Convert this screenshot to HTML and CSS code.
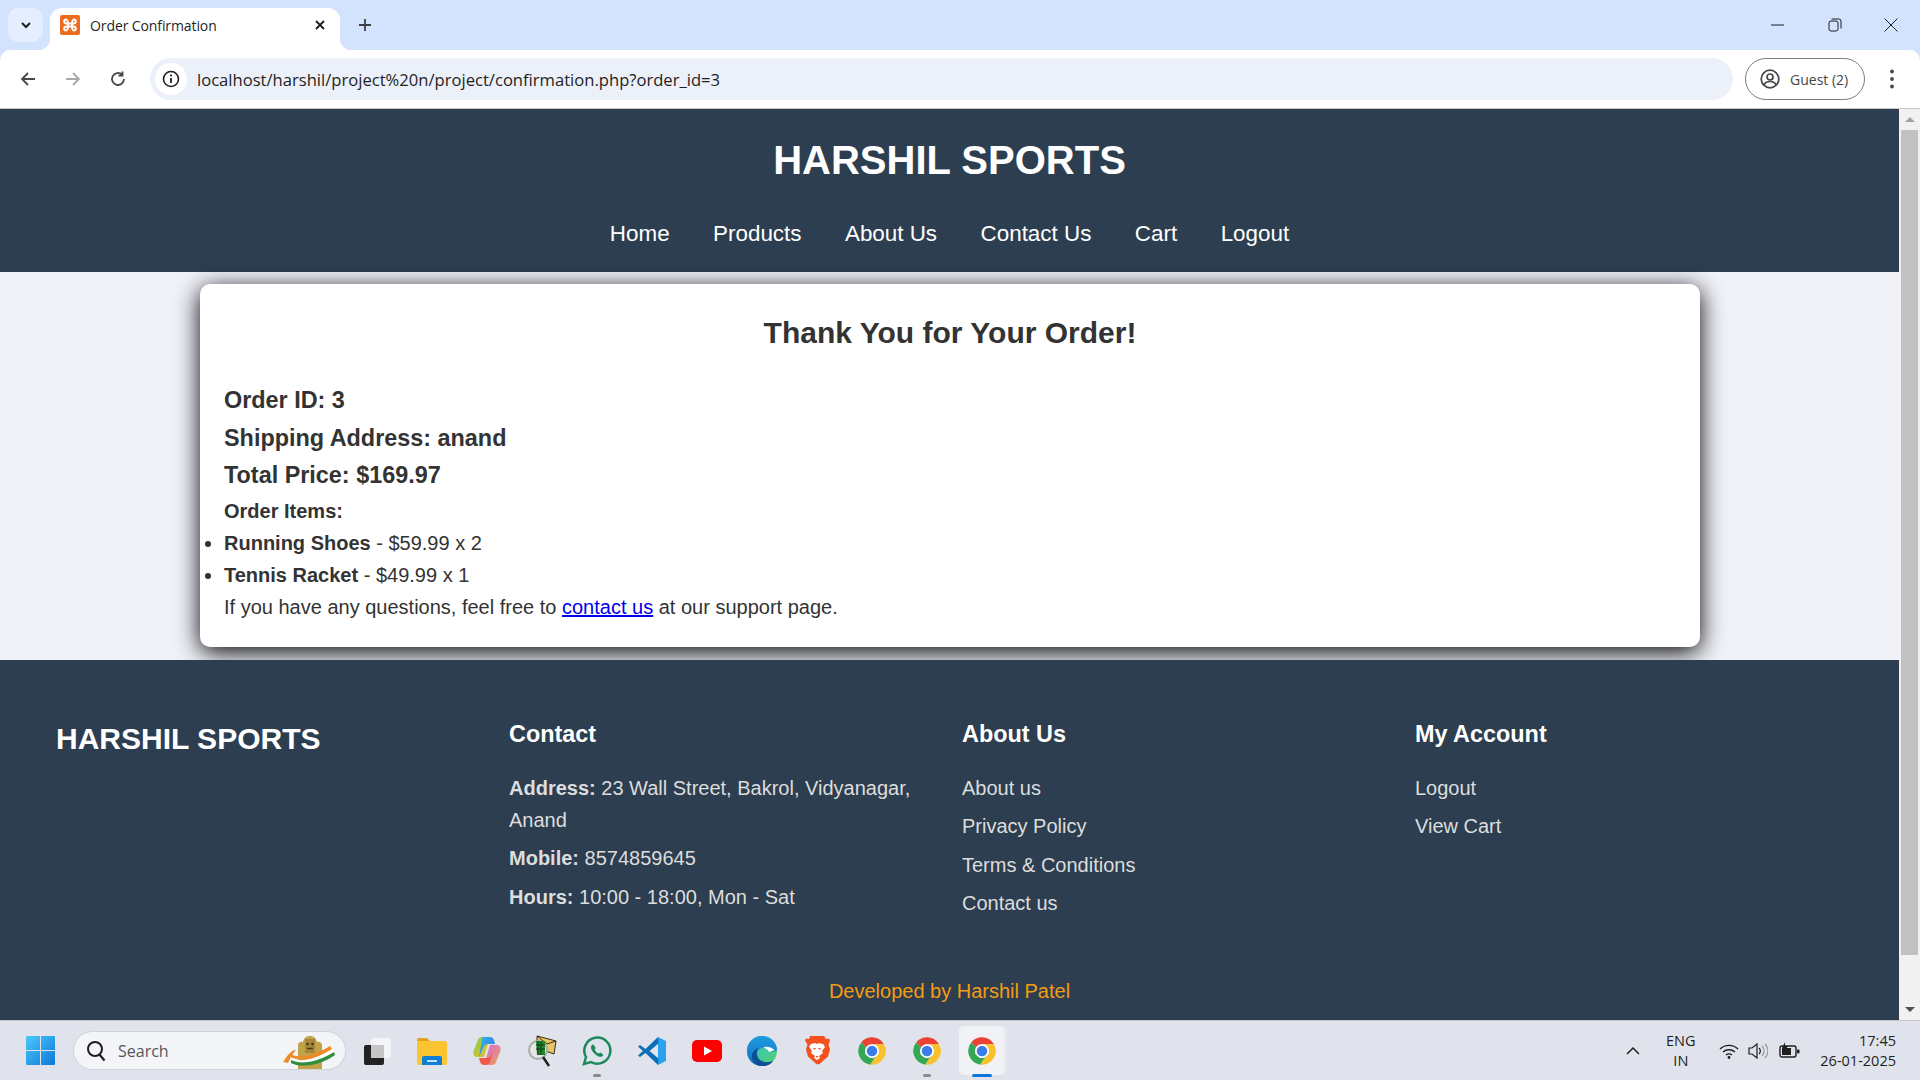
FILE: index.html
```html
<!DOCTYPE html>
<html lang="en">
<head>
  <meta charset="UTF-8" />
  <meta name="viewport" content="width=device-width, initial-scale=1" />
  <title>Order Confirmation</title>
  <link rel="stylesheet" href="styles.css">
</head>
<body>
  <svg class="defs" width="0" height="0">
    <symbol id="chrome" viewBox="0 0 24 24">
      <path fill="#ea4335" d="M12 1A11 11 0 0 1 21.53 6.5H12A5.5 5.5 0 0 0 7.24 9.25L3.47 5.07A11 11 0 0 1 12 1Z"/>
      <path fill="#34a853" d="M3.47 5.07A11 11 0 0 0 10.6 22.9L14.75 16.76A5.5 5.5 0 0 1 7.24 9.25Z"/>
      <path fill="#fbc02d" d="M21.53 6.5A11 11 0 0 1 10.6 22.9L14.75 16.76A5.5 5.5 0 0 0 12 6.5Z"/>
      <circle cx="12" cy="12" r="5.5" fill="#fff"/>
      <circle cx="12" cy="12" r="4.2" fill="#3b7de8"/>
    </symbol>
  </svg>

  <div class="tabstrip">
    <button class="tab-search">
      <svg width="14" height="14" viewBox="0 0 14 14"><path d="M3 5l4 4 4-4" fill="none" stroke="#1f1f1f" stroke-width="2"/></svg>
    </button>
    <div class="tab">
      <svg class="favicon" width="20" height="20" viewBox="0 0 20 20">
        <rect width="20" height="20" rx="2" fill="#ed6c1f"/>
        <path d="M6 4.5c-2.5 0-2.5 4 .5 4h7c3 0 3-4 .5-4-2 0-2 3-2 5.500s0 5.500 2 5.500c2.500 0 2.500-4-.5-4h-7c-3 0-3 4-.5 4 2 0 2-3 2-5.500s0-5.500-2-5.500Z" fill="none" stroke="#fff" stroke-width="2"/>
      </svg>
      <span class="tab-title">Order Confirmation</span>
      <svg class="tab-close" width="12" height="12" viewBox="0 0 12 12"><path d="M2 2l8 8M10 2l-8 8" stroke="#1f1f1f" stroke-width="1.800"/></svg>
    </div>
    <svg class="new-tab" width="14" height="14" viewBox="0 0 14 14"><path d="M7 1v12M1 7h12" stroke="#3c4043" stroke-width="1.800"/></svg>
    <div class="window-controls">
      <svg width="14" height="14" viewBox="0 0 14 14"><path d="M0 7h13" stroke="#1f1f1f"/></svg>
      <svg width="14" height="14" viewBox="0 0 14 14"><rect x="1" y="3" width="9" height="10" rx="2" fill="none" stroke="#1f1f1f"/><path d="M3.500 1H11a2 2 0 0 1 2 2v7.500" fill="none" stroke="#1f1f1f"/></svg>
      <svg width="14" height="14" viewBox="0 0 14 14"><path d="M.5.5l13 13M13.500.5l-13 13" stroke="#1f1f1f"/></svg>
    </div>
  </div>

  <div class="toolbar">
    <svg class="nav-icon" width="18" height="18" viewBox="0 0 18 18"><path d="M16 9H3M9 3L3 9l6 6" fill="none" stroke="#474747" stroke-width="1.800"/></svg>
    <svg class="nav-icon" width="18" height="18" viewBox="0 0 18 18"><path d="M2 9h13M9 3l6 6-6 6" fill="none" stroke="#a8a8a8" stroke-width="1.800"/></svg>
    <svg class="nav-icon" width="18" height="18" viewBox="0 0 18 18"><path d="M15 9a6 6 0 1 1-2-4.500M13.500 1.500v4h-4" fill="none" stroke="#474747" stroke-width="1.800"/></svg>
    <div class="omnibox">
      <span class="site-info">
        <svg width="18" height="18" viewBox="0 0 18 18"><circle cx="9" cy="9" r="7.500" fill="none" stroke="#1f1f1f" stroke-width="1.600"/><path d="M9 8v5" stroke="#1f1f1f" stroke-width="1.800"/><circle cx="9" cy="5.500" r="1.100" fill="#1f1f1f"/></svg>
      </span>
      <span class="url">localhost/harshil/project%20n/project/confirmation.php?order_id=3</span>
    </div>
    <div class="profile">
      <svg width="20" height="20" viewBox="0 0 20 20"><circle cx="10" cy="10" r="8.800" fill="none" stroke="#474747" stroke-width="1.700"/><circle cx="10" cy="8" r="3" fill="none" stroke="#474747" stroke-width="1.700"/><path d="M4 16c1-3 3.500-3.500 6-3.500s5 .5 6 3.500" fill="none" stroke="#474747" stroke-width="1.700"/></svg>
      <span>Guest (2)</span>
    </div>
    <svg class="kebab" width="6" height="20" viewBox="0 0 6 20"><circle cx="3" cy="2.500" r="1.900" fill="#474747"/><circle cx="3" cy="10" r="1.900" fill="#474747"/><circle cx="3" cy="17.500" r="1.900" fill="#474747"/></svg>
  </div>

  <div class="viewport">
    <div class="page">
      <header class="site-header">
        <h1>HARSHIL SPORTS</h1>
        <nav class="main-nav">
          <a href="#">Home</a>
          <a href="#">Products</a>
          <a href="#">About Us</a>
          <a href="#">Contact Us</a>
          <a href="#">Cart</a>
          <a href="#">Logout</a>
        </nav>
      </header>

      <main class="content">
        <section class="order-card">
          <h2>Thank You for Your Order!</h2>
          <p class="order-line">Order ID: 3</p>
          <p class="order-line">Shipping Address: anand</p>
          <p class="order-line">Total Price: $169.97</p>
          <p class="items-title">Order Items:</p>
          <ul class="items">
            <li><strong>Running Shoes</strong> - $59.99 x 2</li>
            <li><strong>Tennis Racket</strong> - $49.99 x 1</li>
          </ul>
          <p class="support">If you have any questions, feel free to <a href="#">contact us</a> at our support page.</p>
        </section>
      </main>

      <footer class="site-footer">
        <div class="footer-cols">
          <div class="footer-brand">HARSHIL SPORTS</div>
          <div class="footer-col">
            <h3>Contact</h3>
            <p><strong>Address:</strong> 23 Wall Street, Bakrol, Vidyanagar, Anand</p>
            <p><strong>Mobile:</strong> 8574859645</p>
            <p><strong>Hours:</strong> 10:00 - 18:00, Mon - Sat</p>
          </div>
          <div class="footer-col">
            <h3>About Us</h3>
            <p><a href="#">About us</a></p>
            <p><a href="#">Privacy Policy</a></p>
            <p><a href="#">Terms &amp; Conditions</a></p>
            <p><a href="#">Contact us</a></p>
          </div>
          <div class="footer-col">
            <h3>My Account</h3>
            <p><a href="#">Logout</a></p>
            <p><a href="#">View Cart</a></p>
          </div>
        </div>
        <p class="credit">Developed by Harshil Patel</p>
      </footer>
    </div>

    <div class="scrollbar">
      <div class="scroll-btn"><span class="arrow-up"></span></div>
      <div class="scroll-thumb"></div>
      <div class="scroll-btn"><span class="arrow-down"></span></div>
    </div>
  </div>

  <div class="taskbar">
    <svg class="start" width="29" height="29" viewBox="0 0 29 29">
      <defs><linearGradient id="win" x1="0" y1="0" x2="1" y2="1"><stop offset="0" stop-color="#4fc8fb"/><stop offset="1" stop-color="#0a78d8"/></linearGradient></defs>
      <path fill="url(#win)" d="M1 0h13v14H0V1a1 1 0 0 1 1-1ZM15 0h13a1 1 0 0 1 1 1v13H15ZM0 15h14v14H1a1 1 0 0 1-1-1ZM15 15h14v13a1 1 0 0 1-1 1H15Z"/>
    </svg>
    <div class="search-pill">
      <svg width="20" height="22" viewBox="0 0 20 22"><circle cx="9" cy="9" r="7" fill="none" stroke="#1f1f1f" stroke-width="2"/><path d="M13.500 14.500l5 6" stroke="#1f1f1f" stroke-width="2.200"/></svg>
      <span>Search</span>
      <svg class="emblem" width="56" height="36" viewBox="0 0 56 36">
        <path d="M16 36V12c0-3 3-4 5-3 1-4 3-6 7-6s6 2 7 6c2-1 5 0 5 3v24Z" fill="#c2a34a"/>
        <path d="M23 6h10v14H23Z" fill="#a6873a"/>
        <circle cx="25.500" cy="11" r="1.300" fill="#4a3a14"/><circle cx="30.500" cy="11" r="1.300" fill="#4a3a14"/>
        <path d="M25 15.500h6" stroke="#4a3a14" stroke-width="1.500"/>
        <path d="M1 29c6-9 9-12 13-12-3 3-5 7-8 13Z" fill="#f08a24"/>
        <path d="M8 24c8 6 22 4 42-8l2 3C38 30 20 33 9 27Z" fill="#fff"/>
        <path d="M8 21c9 5 24 2 40-8l2 3C34 26 20 29 8 24Z" fill="#f08a24"/>
        <path d="M9 27c10 5 27 2 43-8l1 3C38 33 18 35 9 30Z" fill="#2f8f3a"/>
      </svg>
    </div>

    <div class="task-items">
      <div class="task-item">
        <svg width="28" height="28" viewBox="0 0 28 28">
          <rect x="1" y="8" width="20" height="20" rx="2" fill="#222"/>
          <rect x="8" y="1" width="20" height="20" rx="2" fill="#f5f5f7"/>
          <rect x="8" y="8" width="13" height="13" fill="#c6c6c8"/>
        </svg>
      </div>
      <div class="task-item">
        <svg width="30" height="28" viewBox="0 0 30 28">
          <path d="M0 3a2 2 0 0 1 2-2h8l3 3h-13Z" fill="#e0a21a"/>
          <path d="M0 4h28a2 2 0 0 1 2 2v20a2 2 0 0 1-2 2H2a2 2 0 0 1-2-2Z" fill="#fbc531"/>
          <path d="M5 28v-7a2 2 0 0 1 2-2h16a2 2 0 0 1 2 2v7Z" fill="#0f7fd6"/>
          <path d="M10 24h10" stroke="#bfe3fb" stroke-width="2"/>
        </svg>
      </div>
      <div class="task-item">
        <svg width="28" height="30" viewBox="0 0 28 30">
          <defs>
            <linearGradient id="copA" x1="0" y1="0" x2="1" y2="1"><stop offset="0" stop-color="#2fb7e8"/><stop offset="1" stop-color="#3b6fe0"/></linearGradient>
            <linearGradient id="copB" x1="0" y1="0" x2="1" y2="1"><stop offset="0" stop-color="#d76be0"/><stop offset="1" stop-color="#f0a04a"/></linearGradient>
            <linearGradient id="copC" x1="0" y1="0" x2="1" y2="1"><stop offset="0" stop-color="#7cc94a"/><stop offset="1" stop-color="#f2c230"/></linearGradient>
          </defs>
          <path d="M9 1h8l-6 20H4C0 21 0 17 1 14L5 4c.7-2 2-3 4-3Z" fill="url(#copC)"/>
          <path d="M9 1h8c2 0 3 1 4 3l1 4h-7c-3 0-4 1-5 4l-4 9 3-17c.2-2 .5-3 0-3Z" fill="url(#copA)"/>
          <path d="M19 29h-8l6-20h7c4 0 4 4 3 7l-4 10c-.7 2-2 3-4 3Z" fill="url(#copB)"/>
          <path d="M11 29c-2 0-3-1-4-3l-1-4h8c2 0 3-1 4-3l2-5-3 12c-.5 2-3 3-6 3Z" fill="#ef5a4a"/>
        </svg>
      </div>
      <div class="task-item">
        <svg width="30" height="32" viewBox="0 0 30 32">
          <path d="M10 1l19 5-2 13-17-6Z" fill="#e8c468" stroke="#3a3010"/>
          <path d="M10 1l10 8 9-3" fill="none" stroke="#3a3010"/>
          <circle cx="11" cy="15" r="9" fill="#e6e6e6" stroke="#aaa" stroke-width="2"/>
          <path d="M9 6h9v14H10Z" fill="#1f8a2a"/>
          <path d="M11 6v14M14 6v14M9 10h9M9 14h9" stroke="#0c3d10"/>
          <path d="M16 22l6 9" stroke="#222" stroke-width="2.500"/>
        </svg>
      </div>
      <div class="task-item running">
        <svg width="30" height="30" viewBox="0 0 30 30">
          <path d="M2 28l2-7A13 13 0 1 1 9 26Z" fill="none" stroke="#1b8a5a" stroke-width="2.500"/>
          <path d="M10.500 8.500c-1.500 1-2 3-1 5 1.500 3 4 5.500 7 7 2 .8 4 .3 5-1.500l-3-2.500-2 1c-1.500-.7-3-2.200-3.800-3.800l1-2-2.500-3.200Z" fill="#1b8a5a"/>
        </svg>
      </div>
      <div class="task-item">
        <svg width="30" height="30" viewBox="0 0 30 30">
          <path d="M21 1l8 4v20l-8 4Z" fill="#2aa3ee"/>
          <path d="M21 1L8.500 13 3 9 1 10.500 6 15l-5 4.500L3 21l5.500-4L21 29l.5-6.500L12.500 15l9-7.500Z" fill="#0b6fb8"/>
        </svg>
      </div>
      <div class="task-item">
        <svg width="30" height="22" viewBox="0 0 30 22">
          <rect width="30" height="22" rx="5" fill="#f00"/>
          <path d="M12 6.500l8 4.500-8 4.500Z" fill="#fff"/>
        </svg>
      </div>
      <div class="task-item">
        <svg width="30" height="30" viewBox="0 0 30 30">
          <defs>
            <linearGradient id="edgeA" x1="0" y1="0" x2="1" y2="1"><stop offset="0" stop-color="#2ec4d8"/><stop offset="1" stop-color="#56d06a"/></linearGradient>
            <linearGradient id="edgeB" x1="0" y1="0" x2="0" y2="1"><stop offset="0" stop-color="#1f9be0"/><stop offset="1" stop-color="#1270c0"/></linearGradient>
          </defs>
          <circle cx="15" cy="15" r="15" fill="url(#edgeA)"/>
          <path d="M15 0C6 0 0 7 0 15c0 9 7 15 15 15 5 0 9-2 11-5-8 3-15 0-16-6-.6-4 2-7 6-7 3 0 5 2 6 4 2-1 8 0 8-2C30 6 23 0 15 0Z" fill="url(#edgeB)"/>
          <path d="M10 19c1 6 8 9 16 6-2 3-6 5-11 5-5 0-9-3-10-8-1-4 2-9 7-10-2 2-2.500 4-2 7Z" fill="#0e4f96"/>
          <path d="M16 12c3 0 5 2 6 4 2-1 4-1 6-2-3-2-9-5-12-2Z" fill="#fff"/>
        </svg>
      </div>
      <div class="task-item">
        <svg width="26" height="30" viewBox="0 0 26 30">
          <path d="M6 0h14l2 3 3-.5 1 2-1.500 4 1.500 5-2 7-9 8-1-.5-1 .5-9-8-2-7 1.500-5L1 4.500l1-2L5 3Z" fill="#f4511e"/>
          <path d="M7 8l4-1 2 1 2-1 4 1 2 3-3 4 1 2-4 3 1 2-3 2-3-2 1-2-4-3 1-2-3-4Z" fill="#fff"/>
          <path d="M9 12h3l-1.500 2ZM14 12h3l-1.500 2ZM11.500 20h3L13 22Z" fill="#f4511e"/>
        </svg>
      </div>
      <div class="task-item"><svg width="30" height="30"><use href="#chrome"/></svg></div>
      <div class="task-item running"><svg width="30" height="30"><use href="#chrome"/></svg></div>
      <div class="task-item active"><svg width="30" height="30"><use href="#chrome"/></svg></div>
    </div>

    <div class="tray">
      <svg class="tray-chevron" width="14" height="9" viewBox="0 0 14 9"><path d="M1 8l6-6 6 6" fill="none" stroke="#1f1f1f" stroke-width="1.500"/></svg>
      <div class="tray-lang">ENG<br>IN</div>
      <svg class="tray-wifi" width="20" height="16" viewBox="0 0 20 16"><path d="M1 6a13 13 0 0 1 18 0M4 9a9 9 0 0 1 12 0M7 12a5 5 0 0 1 6 0" fill="none" stroke="#1f1f1f" stroke-width="1.400"/><circle cx="10" cy="14.500" r="1.400" fill="#1f1f1f"/></svg>
      <svg class="tray-sound" width="20" height="16" viewBox="0 0 20 16"><path d="M1 5h3l5-4v14l-5-4H1Z" fill="none" stroke="#1f1f1f" stroke-width="1.200"/><path d="M11 5a4 4 0 0 1 0 6" fill="none" stroke="#1f1f1f" stroke-width="1.200"/><path d="M14 3a7 7 0 0 1 0 10M17 1a10 10 0 0 1 0 14" fill="none" stroke="#9a9a9a" stroke-width="1.200"/></svg>
      <svg class="tray-battery" width="21" height="17" viewBox="0 0 21 17"><rect x="1" y="4" width="16" height="11" rx="2" fill="none" stroke="#1f1f1f" stroke-width="1.400"/><rect x="3" y="6" width="9" height="7" fill="#1f1f1f"/><rect x="18" y="7.500" width="2.500" height="4" rx="1" fill="#1f1f1f"/><path d="M6 0L3 6h3l-1 4 4-6H6Z" fill="#1f1f1f"/></svg>
      <div class="tray-clock">17:45<br>26-01-2025</div>
    </div>
  </div>
</body>
</html>
```

FILE: styles.css
```css
* {
  box-sizing: border-box;
}
html, body {
  margin: 0;
  height: 1080px;
  overflow: hidden;
}
body {
  display: flex;
  flex-direction: column;
  font-family: "Liberation Sans", Arial, sans-serif;
  background-color: #d3e3fd;
}
.defs {
  display: none;
}

/* browser chrome */
.tabstrip {
  height: 50px;
  flex: none;
  display: flex;
  align-items: flex-end;
  background-color: #d3e3fd;
}
.tab-search {
  width: 35px;
  height: 34px;
  margin: 0 7px 8px 8px;
  padding: 0;
  border: none;
  border-radius: 10px;
  background-color: #e4eefe;
  display: flex;
  align-items: center;
  justify-content: center;
}
.tab {
  position: relative;
  width: 290px;
  height: 42px;
  padding: 0 14px 8px 10px;
  display: flex;
  align-items: center;
  background-color: #fff;
  border-radius: 12px 12px 0 0;
}
.tab::before,
.tab::after {
  content: "";
  position: absolute;
  bottom: 0;
  width: 12px;
  height: 12px;
}
.tab::before {
  left: -12px;
  background: radial-gradient(circle at 0 0, #d3e3fd 12px, #fff 12.5px);
}
.tab::after {
  right: -12px;
  background: radial-gradient(circle at 100% 0, #d3e3fd 12px, #fff 12.5px);
}
.favicon {
  flex: none;
}
.tab-title {
  flex: 1;
  margin-left: 10px;
  font-family: "Open Sans", sans-serif;
  font-size: 14px;
  letter-spacing: -0.1px;
  color: #1f1f1f;
}
.new-tab {
  margin: 0 0 18px 18px;
}
.window-controls {
  margin-left: auto;
  width: 149px;
  padding-right: 22px;
  height: 100%;
  display: flex;
  align-items: center;
  justify-content: space-between;
}
.toolbar {
  height: 59px;
  flex: none;
  display: flex;
  align-items: center;
  padding-left: 19px;
  background-color: #fff;
  border-bottom: 1px solid #c7c7c7;
  border-radius: 10px 10px 0 0;
}
.nav-icon {
  flex: none;
  margin-right: 27px;
}
.nav-icon:nth-child(3) {
  margin-right: 23px;
}
.omnibox {
  width: 1583px;
  height: 42px;
  flex: none;
  display: flex;
  align-items: center;
  padding-left: 5px;
  border-radius: 21px;
  background-color: #ebf0f9;
}
.site-info {
  width: 32px;
  height: 32px;
  display: flex;
  align-items: center;
  justify-content: center;
  border-radius: 50%;
  background-color: #fff;
}
.url {
  margin-left: 10px;
  font-family: "Open Sans", sans-serif;
  font-size: 16.600px;
  color: #1f1f1f;
}
.profile {
  width: 120px;
  height: 42px;
  flex: none;
  margin-left: 12px;
  padding-left: 14px;
  display: flex;
  align-items: center;
  gap: 10px;
  border: 1px solid #7d7d7d;
  border-radius: 21px;
  font-family: "Open Sans", sans-serif;
  font-size: 14px;
  color: #474747;
}
.kebab {
  margin-left: 24px;
}

/* page area */
.viewport {
  flex: 1;
  min-height: 0;
  display: flex;
}
.page {
  width: 1899px;
  flex: none;
  display: flex;
  flex-direction: column;
  overflow: hidden;
  line-height: 1.6;
  background-color: #f0f2f8;
  color: #333;
}
.scrollbar {
  flex: 1;
  padding: 0 2px;
  display: flex;
  flex-direction: column;
  background-color: #f1f1f1;
}
.scroll-btn {
  height: 21px;
  flex: none;
  display: flex;
  align-items: center;
  justify-content: center;
}
.scroll-btn:last-child {
  margin-top: auto;
}
.scroll-thumb {
  height: 825px;
  flex: none;
  background-color: #c1c1c1;
}
.arrow-up,
.arrow-down {
  width: 0;
  height: 0;
  border-left: 5px solid transparent;
  border-right: 5px solid transparent;
}
.arrow-up {
  border-bottom: 5px solid #a3a3a3;
}
.arrow-down {
  border-top: 5px solid #505050;
}

.site-header {
  height: 163px;
  flex: none;
  padding-top: 19px;
  text-align: center;
  background-color: #2c3e50;
  color: #fff;
}
.site-header h1 {
  margin: 0 0 24px;
  font-size: 40px;
  line-height: 64px;
}
.main-nav {
  display: flex;
  justify-content: center;
  gap: 43.500px;
  font-size: 22.4px;
  line-height: 36px;
}
.main-nav a {
  color: #fff;
  text-decoration: none;
}

.content {
  height: 388px;
  flex: none;
  padding: 12px 199px 0 200px;
}
.order-card {
  height: 363px;
  padding: 24px;
  background-color: #fff;
  border-radius: 10px;
  box-shadow: 0 5px 25px #000;
}
.order-card h2 {
  margin: 0 0 24px;
  text-align: center;
  font-size: 30px;
  line-height: 50px;
}
.order-line {
  margin: 0;
  font-size: 23.4px;
  font-weight: bold;
  line-height: 37.500px;
}
.items-title {
  margin: 0;
  font-size: 20px;
  font-weight: bold;
  line-height: 32px;
}
.items {
  margin: 0;
  padding: 0;
  font-size: 20px;
  line-height: 32px;
}
.support {
  margin: 0;
  font-size: 20px;
  line-height: 32px;
}
.support a {
  color: #00e;
}

.site-footer {
  flex: 1;
  padding-top: 55px;
  background-color: #2c3e50;
  color: #ddd;
  font-size: 20px;
}
.footer-cols {
  display: grid;
  grid-template-columns: repeat(4, 453px);
  padding-left: 56px;
}
.footer-brand {
  font-size: 30px;
  font-weight: bold;
  line-height: 48px;
  color: #fff;
}
.footer-col {
  padding-right: 30px;
}
.footer-col h3 {
  margin: 0 0 19px;
  font-size: 23.4px;
  line-height: 38px;
  color: #fff;
}
.footer-col p {
  margin: 0 0 6.400px;
  line-height: 32px;
}
.footer-col a {
  color: #ddd;
  text-decoration: none;
}
.credit {
  margin: 49px 0 0;
  text-align: center;
  line-height: 32px;
  color: #f39c12;
}

/* windows taskbar */
.taskbar {
  height: 60px;
  flex: none;
  display: flex;
  align-items: center;
  padding-left: 26px;
  border-top: 1px solid #c4c6cc;
  background-color: #e0e3eb;
  color: #1f1f1f;
  font-family: "Open Sans", sans-serif;
}
.start {
  flex: none;
  margin-right: 18px;
}
.search-pill {
  width: 273px;
  height: 39px;
  flex: none;
  display: flex;
  align-items: center;
  padding: 0 7px 0 12px;
  border: 1px solid #d0d2d8;
  border-radius: 20px;
  background-color: #f4f5f9;
  font-size: 16px;
  color: #555;
}
.search-pill span {
  margin-left: 12px;
}
.emblem {
  margin-left: auto;
}
.task-items {
  display: flex;
  margin-left: 3.500px;
  height: 100%;
}
.task-item {
  position: relative;
  width: 55px;
  display: flex;
  align-items: center;
  justify-content: center;
}
.task-item svg {
  position: relative;
}
.task-item.running::after,
.task-item.active::after {
  content: "";
  position: absolute;
  bottom: 3px;
  left: 50%;
  width: 8px;
  height: 3px;
  margin-left: -4px;
  border-radius: 2px;
  background-color: #8a8a8a;
}
.task-item.active::after {
  width: 20px;
  margin-left: -10px;
  background-color: #0a78d8;
}
.task-item.active::before {
  content: "";
  position: absolute;
  top: 5px;
  bottom: 5px;
  left: 4px;
  right: 6px;
  border-radius: 5px;
  background-color: #f0f2f6;
  box-shadow: 3px 0 0 #e9ebf1;
}
.tray {
  margin-left: auto;
  display: flex;
  align-items: center;
  padding-right: 24px;
  font-size: 14.500px;
  line-height: 20px;
}
.tray-chevron {
  margin-right: 21px;
}
.tray-lang {
  width: 40px;
  text-align: center;
  margin-right: 18px;
}
.tray-wifi {
  margin-right: 9px;
}
.tray-sound {
  margin-right: 11px;
}
.tray-battery {
  margin-right: 20.500px;
}
.tray-clock {
  text-align: right;
}
```
